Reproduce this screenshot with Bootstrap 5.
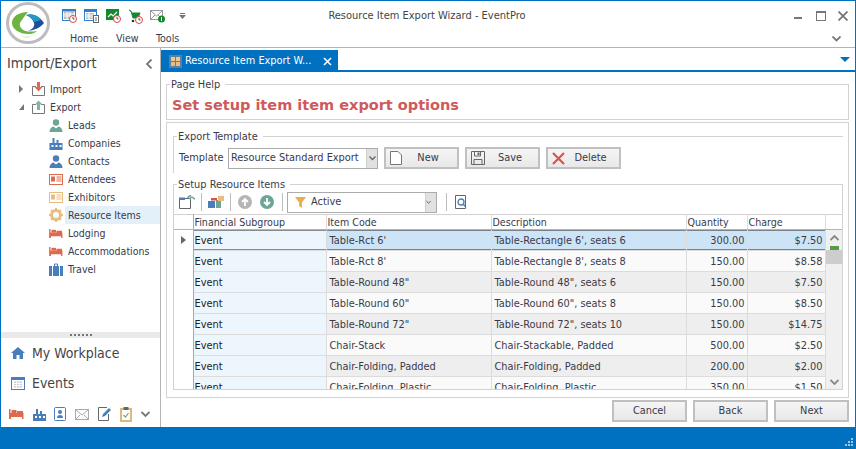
<!DOCTYPE html>
<html lang="en"><head><meta charset="utf-8"><title>Resource Item Export Wizard - EventPro</title>
<link href="https://cdn.jsdelivr.net/npm/bootstrap@5.3.0/dist/css/bootstrap.min.css" rel="stylesheet">
<style>
html,body{height:449px;overflow:hidden;margin:0}
body{font-family:"DejaVu Sans Condensed","DejaVu Sans",sans-serif;font-stretch:condensed;font-size:11px;color:#3a3a4a;background:#fff}
.win{width:856px;height:449px;border:solid #0070c0;border-width:1px 1px 0 1px;overflow:hidden}
.capt{height:47px;border-bottom:1px solid #b4b4b4;flex:none}
.logo-wrap{width:52px;flex:none;padding:1px 0 0 5px}
.qat{height:29px;padding-left:9px;padding-top:1px}
.qat svg{display:block;margin-right:7px}
.qat svg.env{margin-right:13px}
.caption-title{flex:1;text-align:center;font-size:11px;color:#444;padding-right:133px}
.winbtns{gap:12px;padding-right:7px}
.winbtns svg{margin:0}
.ribbon-tabs{height:17px;padding-left:17px;padding-top:1px;font-size:10.6px}
.ribbon-tabs span{display:block}
.rt-home{width:46px}
.rt-view{width:40px}
.rt-more{margin-right:14px}
.side{width:160px;flex:none;border-right:1px solid #b4b4b4}
.side-head{height:32px;padding:0 7px 0 6px;font-size:14.4px;color:#444}
.tree{flex:1;font-size:10.5px}
.tnode{height:18px;display:flex;align-items:center}
.tnode.l1{padding-left:15px}
.tnode.l2{padding-left:48px}
.tnode svg{flex:none}
.tnode .lbl{margin-left:2px;padding-left:3px;height:18px;line-height:18px;flex:1}
.tnode.l1 .lbl{margin-left:1px}
.tnode.hl .lbl{background:#e3eff9}
.split{height:6px;background:#e9e9e9;flex:none}
.dots{width:22px;height:2px;background-image:linear-gradient(90deg,#777 50%,transparent 50%);background-size:4px 2px}
.nav-big{height:30px;padding-left:10px;gap:7px;font-size:13.9px;color:#444;flex:none}
.side-foot{height:29px;padding:3px 10px 0 8px;flex:none}
.work{flex:1;min-width:0}
.tabbar{height:24px;border-bottom:2px solid #0070c0;flex:none}
.doc-tab{width:177px;height:22px;margin-top:2px;background:#0070c0;color:#fff;font-size:10.9px;padding:0 6px 0 8px;gap:3px}
.doc-tab .t{flex:1;white-space:nowrap}
.tab-arrow{margin-left:auto;margin-right:5px;width:0;height:0;border:5px solid transparent;border-top:5px solid #0070c0;border-bottom:0}
.content{padding:6px 6px 0 5px;flex:1;min-height:0}
fieldset.grp{border:solid #d2d2d2;border-width:1px 0 0 1px;padding:0;margin:0;min-width:0}
fieldset.grp>legend{float:none;width:auto;font-size:10.9px;margin:0 0 0 3px;padding:0 5px 0 1px;line-height:13px;color:#3a3a4a}
fieldset.help-fs{height:42px;border:1px solid #d2d2d2}
.help-title{font-family:"DejaVu Sans",sans-serif;font-stretch:normal;font-weight:700;font-size:14.5px;color:#cf5a5a;line-height:20px;padding-left:5px;margin-top:4px;white-space:nowrap}
.frame{border:1px solid #d2d2d2;height:276px;margin-top:2px;padding:7px 5px 0 6px}
.tpl{height:26px;padding-left:5px;margin-top:2px;padding-bottom:0}
.tpl-fs{padding-bottom:2px!important}
.tpl .lab{font-size:10.9px;width:49px;flex:none}
.combo{border:1px solid #ababab;height:21px;display:flex;align-items:center;background:#fff;padding-left:2px;font-size:10.9px}
.combo .txt{flex:1;white-space:nowrap}
.combo .dd{width:11px;height:19px;background:#e1e1e1;border-left:1px solid #d0d0d0;display:flex;align-items:center;justify-content:center}
.combo-tpl{width:150px}
.combo-act{width:150px;height:21px;padding-left:7px}
.combo-act svg{margin-right:5px}
.btnx{border:2px solid #c0c0c0;background:linear-gradient(#f5f5f5,#e8e8e8);border-radius:0;font-size:10.9px;color:#3a3a4a;height:22px;padding:0;line-height:18px;display:flex;align-items:center}
.btn-tpl{width:75px;margin-left:6px}
.btn-tpl svg{margin-left:4px;flex:none}
.btn-tpl span{flex:1;text-align:center;padding-right:3px}
.foot-btn{width:75px;justify-content:center}
.setup-fs{margin-top:5px!important;border-right-width:1px!important}
.tb{height:22px;padding-left:5px;margin-top:0;margin-bottom:1px}
.tb .sep{width:1px;height:18px;background:#bdbdbd;flex:none}
.tb .s1{margin:0 6px}
.tb .s2{margin:0 7px 0 5px}
.tb .s3{margin:0 4px 0 8px}
.tb .s4{margin:0 8px 0 9px}
.gapx{margin-right:8px}
.grid-wrap{height:176px;overflow:hidden;display:flex;border-bottom:1px solid #d2d2d2}
table.gridt{table-layout:fixed;border-collapse:collapse;width:651px;margin:0;font-size:10.9px;flex:none;align-self:flex-start}
table.gridt th,table.gridt td{padding:1px 2px 0 3px;height:21px;border-right:1px solid #dcdcdc;border-bottom:1px solid #dcdcdc;font-weight:400;white-space:nowrap;overflow:hidden;background:#fafafa;color:#3a3a4a;line-height:14px}
table.gridt th{height:15px;background:#fff;border-top:1px solid #d2d2d2;border-bottom:1px solid #b4b4b4;padding:0 1px;font-size:10.6px}
table.gridt tr.alt td{background:#eeeeee}
table.gridt td.fin,table.gridt tr.alt td.fin{background:#eef6fd;color:#222;padding-left:1px}
table.gridt td.num{text-align:right}
table.gridt tr.sel td{background-color:#cde4f7}
table.gridt tr.sel td.fin{background-color:#eef6fd}
table.gridt tr.sel td:not(.ind){background-image:linear-gradient(90deg,#222 50%,transparent 50%),linear-gradient(90deg,#222 50%,transparent 50%);background-size:2px 1px;background-repeat:repeat-x;background-position:0 0,0 100%}
table.gridt tr th.ind,table.gridt tr td.ind,table.gridt tr.sel td.ind,table.gridt tr.alt td.ind{padding:0;background:#fff;border:0;border-right:1px solid #a9a9b4;text-align:center}
table.gridt tr th.ind{border-top:1px solid #d2d2d2;border-bottom:1px solid #b4b4b4}
.sb{width:17px;flex:none;background:#f0f0f0;display:flex;flex-direction:column;height:176px}
.sb .head{height:16px;background:#fff;border-top:1px solid #d2d2d2;border-bottom:1px solid #b4b4b4;flex:none}
.sb .up{height:16px;display:flex;align-items:center;justify-content:center;flex:none}
.sb .mark{height:2px;background:#5a9a46;margin:0 4px;flex:none}
.sb .thumb{height:14px;background:#cdcdcd;flex:none}
.sb .rest{flex:1}
.sb .dn{height:16px;display:flex;align-items:center;justify-content:center;flex:none}
.footer-btns{gap:6px;padding-top:2px;flex:none;height:29px}
.status{height:22px;background:#0070c0;flex:none;padding:0 1px 2px 0}
</style></head><body>
<svg width="0" height="0" class="d-none">
<defs>
<symbol id="bed" viewBox="0 0 15 12"><path fill="#dd6a4c" d="M0 1h1.500v4h13v6H13V9H2v2H0z"/><rect x="2.500" y="2" width="5" height="3" fill="#dd6a4c"/><rect x="8" y="3" width="6" height="2.500" fill="#dd6a4c"/></symbol>
<symbol id="fact" viewBox="0 0 13 13"><path fill="#4a7ebb" d="M0 13V6h3V1h2v5h2V3h2v3h4v7z"/><path fill="#fff" d="M2 8h2v2H2zM6 8h2v2H6zM10 8h2v2h-2z"/></symbol>
<symbol id="pers" viewBox="0 0 13 13"><circle cx="6.500" cy="3.500" r="3.200"/><path d="M0 13c0-3.500 2-5 4-5.500l2.500 2 2.500-2c2 .5 4 2 4 5.500z"/></symbol>
<symbol id="card" viewBox="0 0 14 11"><rect x=".5" y=".5" width="13" height="10" fill="#fff" stroke="currentColor"/><rect x="2" y="2.500" width="4" height="5" fill="currentColor"/><path d="M7.500 3h5M7.500 5h5M7.500 7h5" stroke="currentColor"/></symbol>
<symbol id="cal" viewBox="0 0 14 13"><rect x=".5" y=".5" width="13" height="12" fill="#fff" stroke="#4a7ebb"/><rect x="1" y="1" width="12" height="2" fill="#4a7ebb"/><path d="M3 4.500h8v6H3z" fill="#ccc"/><path d="M3 6.500h8M3 8.500h8M5.500 4.500v6M8.500 4.500v6" stroke="#fff"/></symbol>
</defs></svg>
<div class="win d-flex flex-column">
 <div class="capt d-flex">
  <div class="logo-wrap"><svg width="44" height="42" viewBox="0 0 44 42"><ellipse cx="22" cy="21" rx="20.500" ry="19.500" fill="#fff" stroke="#bdbdbd" stroke-width="3"/><path fill="#6cb33f" d="M22 10C12 10 6 15 6 21c0 6 7 11 17 11 3 0 6-1 8-3-6 1-12 1-15-2-3-3-3-6 0-9 2-3 4-6 6-8z"/><path fill="#1f4f9c" d="M20 13c7-2 14 1 18 8-4 5-9 7-16 8 5-2 7-5 6-8s-3-6-8-8z"/><path fill="#1e9bc7" d="M20 13c6-2 11 0 15 5-2 1-5 1-7 2-1-3-4-5-8-7z"/><path fill="#dfeecf" d="M14 33c4 2 9 2 13 0-4 4-9 4-13 0z"/></svg></div>
  <div class="flex-grow-1 d-flex flex-column">
   <div class="qat d-flex align-items-center">
    <svg width="15" height="14" viewBox="0 0 15 14"><rect x=".5" y=".5" width="13" height="11" fill="#fff" stroke="#2f7fd0"/><rect x="1" y="1" width="12" height="1.500" fill="#2f7fd0"/><path d="M2 3h10v7H2z" fill="#bbb"/><path d="M2 5h10M2 7h10M5 3v7M8 3v7" stroke="#fff"/><circle cx="11" cy="10" r="3.500" fill="#fff" stroke="#d44"/><path d="M11 8v2h1.500" stroke="#555" fill="none"/></svg>
    <svg width="15" height="14" viewBox="0 0 15 14"><rect x=".5" y=".5" width="12" height="11" fill="#fff" stroke="#2f7fd0"/><rect x="1" y="1" width="11" height="2" fill="#2f7fd0"/><path d="M2 4h8v6H2z" fill="#bbb"/><path d="M2 6h8M2 8h8M5 4v6" stroke="#fff"/><rect x="9.500" y="6.500" width="5" height="7" fill="#fff" stroke="#666"/><path d="M11 9h2M11 11h2" stroke="#666"/></svg>
    <svg width="15" height="14" viewBox="0 0 15 14"><rect width="13" height="11" fill="#118a2e"/><path d="M2 8l3-3 2 2 4-4" stroke="#fff" fill="none" stroke-width="1.200"/><circle cx="11" cy="10" r="3.500" fill="#fff" stroke="#d44"/><path d="M11 8v2h1.500" stroke="#555" fill="none"/></svg>
    <svg width="15" height="15" viewBox="0 0 15 15"><path d="M1 1l2 1 2 7h5l2-5H4" fill="#118a2e" stroke="#118a2e"/><circle cx="5" cy="12" r="1.300" fill="#333"/><circle cx="11" cy="11" r="3.500" fill="#fff" stroke="#d44"/><path d="M11 9v2h1.500" stroke="#555" fill="none"/></svg>
    <svg class="env" width="16" height="14" viewBox="0 0 16 14"><rect x=".5" y="1.500" width="12" height="9" fill="#fff" stroke="#999"/><path d="M1 2l5.500 5L12 2M1 10l4-4M12 10L8 6" stroke="#999" fill="none"/><circle cx="11.500" cy="10" r="3.500" fill="#118a2e"/><path d="M11.500 8v4" stroke="#fff"/></svg>
    <svg width="7" height="6" viewBox="0 0 7 6"><path d="M1 0h5v1H1zM0 2h7L3.500 6z" fill="#777"/></svg>
    <div class="caption-title">Resource Item Export Wizard - EventPro</div>
    <div class="winbtns d-flex align-items-center">
     <svg width="10" height="10" viewBox="0 0 10 10"><rect y="6" width="8" height="2" fill="#777"/></svg>
     <svg width="10" height="10" viewBox="0 0 10 10"><rect x=".5" y=".5" width="9" height="9" fill="none" stroke="#777"/><rect width="10" height="2" fill="#777"/></svg>
     <svg width="10" height="10" viewBox="0 0 10 10"><path d="M.5.500l9 9M9.500.500l-9 9" stroke="#777" stroke-width="1.800"/></svg>
    </div>
   </div>
   <div class="ribbon-tabs d-flex align-items-center">
    <span class="rt-home">Home</span><span class="rt-view">View</span><span>Tools</span>
    <svg class="ms-auto rt-more" width="9" height="6" viewBox="0 0 9 6"><path d="M.5.500l4 4 4-4" stroke="#777" stroke-width="1.800" fill="none"/></svg>
   </div>
  </div>
 </div>
 <div class="d-flex flex-grow-1" style="min-height:0">
  <div class="side d-flex flex-column">
   <div class="side-head d-flex align-items-center justify-content-between"><span>Import/Export</span><svg width="8" height="10" viewBox="0 0 8 10"><path d="M6.500.500L2 5l4.500 4.500" stroke="#777" stroke-width="1.800" fill="none"/></svg></div>
   <div class="tree">
    <div class="tnode l1"><svg width="16" height="8" viewBox="0 0 16 8"><path d="M3 0l4 4-4 4z" fill="#777"/></svg><svg width="14" height="14" viewBox="0 0 14 14"><path d="M4 4.500H.5v9h12v-9H9" fill="none" stroke="#777"/><path d="M5 0h3v5h2.500l-4 4.500-4-4.500H5z" fill="#dd6a4c"/></svg><span class="lbl">Import</span></div>
    <div class="tnode l1"><svg width="16" height="8" viewBox="0 0 16 8"><path d="M8 1v6H3z" fill="#777"/></svg><svg width="14" height="14" viewBox="0 0 14 14"><path d="M4 4.500H.5v9h12v-9H9" fill="none" stroke="#777"/><path d="M5 10V4.500H3L6.500.500l4 4H8V10z" fill="#7fb5a8"/></svg><span class="lbl">Export</span></div>
    <div class="tnode l2"><svg width="14" height="13" fill="#6da596"><use href="#pers"/></svg><span class="lbl">Leads</span></div>
    <div class="tnode l2"><svg width="14" height="13"><use href="#fact"/></svg><span class="lbl">Companies</span></div>
    <div class="tnode l2"><svg width="14" height="13" fill="#4a7ebb"><use href="#pers"/></svg><span class="lbl">Contacts</span></div>
    <div class="tnode l2"><svg width="14" height="11" color="#dd6a4c"><use href="#card"/></svg><span class="lbl">Attendees</span></div>
    <div class="tnode l2"><svg width="14" height="11" color="#e8bd80"><use href="#card"/></svg><span class="lbl">Exhibitors</span></div>
    <div class="tnode l2 hl"><svg width="14" height="14" viewBox="0 0 14 14"><circle cx="7" cy="7" r="4.500" fill="none" stroke="#e8bd80" stroke-width="3"/><path d="M7 0v14M0 7h14M2 2l10 10M12 2L2 12" stroke="#e8bd80" stroke-width="2" stroke-dasharray="2.500 9 2.500"/></svg><span class="lbl">Resource Items</span></div>
    <div class="tnode l2"><svg width="14" height="11"><use href="#bed"/></svg><span class="lbl">Lodging</span></div>
    <div class="tnode l2"><svg width="14" height="11"><use href="#bed"/></svg><span class="lbl">Accommodations</span></div>
    <div class="tnode l2"><svg width="14" height="13" viewBox="0 0 14 13"><path d="M0 3h3v10H0zM4 3h6v10H4zM11 3h3v10h-3z" fill="#4a7ebb"/><path d="M5.500 3V1h3v2" fill="none" stroke="#4a7ebb"/></svg><span class="lbl">Travel</span></div>
   </div>
   <div class="split d-flex justify-content-center align-items-center"><div class="dots"></div></div>
   <div class="nav-big d-flex align-items-center"><svg width="14" height="12" viewBox="0 0 14 12"><path d="M7 0l7 6h-2v6H8.500V8h-3v4H2V6H0z" fill="#4a7ebb"/></svg><span>My Workplace</span></div>
   <div class="nav-big d-flex align-items-center"><svg width="14" height="13"><use href="#cal"/></svg><span>Events</span></div>
   <div class="side-foot d-flex align-items-center justify-content-between">
    <svg width="15" height="12"><use href="#bed"/></svg>
    <svg width="13" height="13"><use href="#fact"/></svg>
    <svg width="12" height="14" viewBox="0 0 12 14"><rect x=".5" y=".5" width="11" height="13" rx="1" fill="#fff" stroke="#4a7ebb"/><circle cx="6" cy="5" r="2" fill="#4a7ebb"/><path d="M3 11c0-2 1-3 3-3s3 1 3 3z" fill="#4a7ebb"/></svg>
    <svg width="14" height="11" viewBox="0 0 14 11"><rect x=".5" y=".5" width="13" height="10" fill="#fff" stroke="#aaa"/><path d="M1 1l6 5 6-5M1 10l4-4M13 10L9 6" stroke="#aaa" fill="none"/></svg>
    <svg width="14" height="14" viewBox="0 0 14 14"><path d="M9 .500H.5v13h10V7" fill="none" stroke="#666"/><path d="M4 10l1-3 6-6 2 2-6 6z" fill="#4a7ebb"/></svg>
    <svg width="12" height="15" viewBox="0 0 12 15"><rect x="1" y="2" width="10" height="12" fill="#fff" stroke="#e0b878" stroke-width="2"/><rect x="3.500" y="0" width="5" height="3" fill="#666"/><path d="M3.500 8l2 2 3-4" stroke="#6da596" fill="none" stroke-width="1.200"/></svg>
    <svg width="9" height="7" viewBox="0 0 9 7"><path d="M.5 1l4 4 4-4" stroke="#777" stroke-width="1.800" fill="none"/></svg>
   </div>
  </div>
  <div class="work d-flex flex-column">
   <div class="tabbar d-flex">
    <div class="doc-tab d-flex align-items-center">
     <svg width="13" height="13" viewBox="0 0 13 13"><rect x=".5" y=".5" width="12" height="12" fill="#5b7fa8" stroke="#7a7a7a"/><path d="M2 2h4v4H2zM7 2h4v4H7z" fill="#f0c98a"/><path d="M2 7h4v4H2zM7 7h4v4H7z" fill="#e8bd80"/></svg>
     <span class="t">Resource Item Export W...</span>
     <svg width="9" height="9" viewBox="0 0 9 9"><path d="M1 1l7 7M8 1L1 8" stroke="#fff" stroke-width="1.600"/></svg>
    </div>
    <div class="tab-arrow align-self-center"></div>
   </div>
   <div class="content d-flex flex-column">
    <fieldset class="grp help-fs"><legend>Page Help</legend><div class="help-title">Set setup item item export options</div></fieldset>
    <div class="frame">
     <fieldset class="grp tpl-fs"><legend>Export Template</legend>
      <div class="tpl d-flex align-items-center">
       <span class="lab">Template</span>
       <div class="combo combo-tpl"><span class="txt">Resource Standard Export</span><span class="dd"><svg width="7" height="5" viewBox="0 0 7 5"><path d="M.5.500l3 3 3-3" stroke="#666" stroke-width="1.400" fill="none"/></svg></span></div>
       <button type="button" class="btnx btn-tpl"><svg width="12" height="14" viewBox="0 0 12 14"><path d="M.5.500H8L11.500 4v9.500H.5z" fill="#fff" stroke="#777"/></svg><span>New</span></button>
       <button type="button" class="btnx btn-tpl"><svg width="14" height="14" viewBox="0 0 14 14"><path d="M.5.500h13v13H.5z" fill="none" stroke="#666"/><path d="M3.500 1v4h6V1M3 13V8.500h8V13" fill="none" stroke="#666"/><rect x="6.500" y="1.500" width="2" height="2.500" fill="#666"/></svg><span>Save</span></button>
       <button type="button" class="btnx btn-tpl"><svg width="13" height="13" viewBox="0 0 13 13"><path d="M1 1l11 11M12 1L1 12" stroke="#d9534f" stroke-width="2.200"/></svg><span>Delete</span></button>
      </div>
     </fieldset>
     <fieldset class="grp setup-fs"><legend>Setup Resource Items</legend>
      <div class="tb d-flex align-items-center">
       <svg width="16" height="14" viewBox="0 0 16 14"><path d="M.5 3.500h11v10H.5z" fill="#fff" stroke="#666"/><rect x="0" y="2.500" width="6" height="2.500" fill="#4a7ebb"/><path d="M16 4.500c-1-2-3-2.500-5-2.500M12 0L9 2l3 2.500" stroke="#6da596" stroke-width="1.500" fill="none"/></svg>
       <span class="sep s1"></span>
       <svg width="17" height="12" viewBox="0 0 17 12"><rect y="5" width="7" height="7" fill="#4a7ebb"/><rect x="8" y="4" width="5" height="8" fill="#6da596"/><rect x="3" y="2" width="6" height="2.500" fill="#d9534f"/><rect x="10" y="0" width="6" height="5" fill="#e8bd80"/></svg>
       <span class="sep s2"></span>
       <svg class="gapx" width="14" height="14" viewBox="0 0 14 14"><circle cx="7" cy="7" r="7" fill="#b5b5b5"/><path d="M7 11V4M4 7l3-3 3 3" stroke="#fff" stroke-width="1.800" fill="none"/></svg>
       <svg width="14" height="14" viewBox="0 0 14 14"><circle cx="7" cy="7" r="7" fill="#6da596"/><path d="M7 3v7M4 7l3 3 3-3" stroke="#fff" stroke-width="1.800" fill="none"/></svg>
       <span class="sep s3"></span>
       <div class="combo combo-act"><svg width="11" height="13" viewBox="0 0 12 14"><path d="M0 1h12L7.500 7v6l-3-2V7z" fill="#e8ad50"/></svg><span class="txt">Active</span><span class="dd"><svg width="7" height="5" viewBox="0 0 7 5"><path d="M.5.500l3 3 3-3" stroke="#666" stroke-width="1.400" fill="none"/></svg></span></div>
       <span class="sep s4"></span>
       <svg width="14" height="14" viewBox="0 0 14 14"><path d="M.5.500h10v13H.5z" fill="#fff" stroke="#666"/><circle cx="6" cy="7" r="3" fill="#fff" stroke="#4a7ebb" stroke-width="1.300"/><path d="M8 9l3 3" stroke="#4a7ebb" stroke-width="1.500"/></svg>
      </div>
      <div class="grid-wrap">
       <table class="gridt">
        <colgroup><col style="width:19px"><col style="width:133px"><col style="width:165px"><col style="width:195px"><col style="width:61px"><col style="width:78px"></colgroup>
        <thead><tr><th class="ind"></th><th>Financial Subgroup</th><th>Item Code</th><th>Description</th><th>Quantity</th><th>Charge</th></tr></thead>
        <tbody>
        <tr class="sel"><td class="ind"><svg width="5" height="8" viewBox="0 0 5 8"><path d="M0 0l5 4-5 4z" fill="#666"/></svg></td><td class="fin">Event</td><td>Table-Rct 6'</td><td>Table-Rectangle 6', seats 6</td><td class="num">300.00</td><td class="num">$7.50</td></tr>
        <tr><td class="ind"></td><td class="fin">Event</td><td>Table-Rct 8'</td><td>Table-Rectangle 8', seats 8</td><td class="num">150.00</td><td class="num">$8.58</td></tr>
        <tr class="alt"><td class="ind"></td><td class="fin">Event</td><td>Table-Round 48"</td><td>Table-Round 48", seats 6</td><td class="num">150.00</td><td class="num">$7.50</td></tr>
        <tr><td class="ind"></td><td class="fin">Event</td><td>Table-Round 60"</td><td>Table-Round 60", seats 8</td><td class="num">150.00</td><td class="num">$8.50</td></tr>
        <tr class="alt"><td class="ind"></td><td class="fin">Event</td><td>Table-Round 72"</td><td>Table-Round 72", seats 10</td><td class="num">150.00</td><td class="num">$14.75</td></tr>
        <tr><td class="ind"></td><td class="fin">Event</td><td>Chair-Stack</td><td>Chair-Stackable, Padded</td><td class="num">500.00</td><td class="num">$2.50</td></tr>
        <tr class="alt"><td class="ind"></td><td class="fin">Event</td><td>Chair-Folding, Padded</td><td>Chair-Folding, Padded</td><td class="num">200.00</td><td class="num">$2.00</td></tr>
        <tr><td class="ind"></td><td class="fin">Event</td><td>Chair-Folding, Plastic</td><td>Chair-Folding, Plastic</td><td class="num">350.00</td><td class="num">$1.50</td></tr>
        </tbody>
       </table>
       <div class="sb"><div class="head"></div><div class="up"><svg width="9" height="6" viewBox="0 0 9 6"><path d="M.5 5l4-4 4 4" stroke="#888" stroke-width="1.800" fill="none"/></svg></div><div class="mark"></div><div class="thumb"></div><div class="rest"></div><div class="dn"><svg width="9" height="6" viewBox="0 0 9 6"><path d="M.5 1l4 4 4-4" stroke="#888" stroke-width="1.800" fill="none"/></svg></div></div>
      </div>
     </fieldset>
    </div>
    <div class="footer-btns d-flex justify-content-end align-items-start">
     <button type="button" class="btnx foot-btn">Cancel</button><button type="button" class="btnx foot-btn">Back</button><button type="button" class="btnx foot-btn">Next</button>
    </div>
   </div>
  </div>
 </div>
 <div class="status d-flex justify-content-end align-items-end"><svg width="9" height="9" viewBox="0 0 9 9"><path d="M6 0h2v2H6zM3 3h2v2H3zM6 3h2v2H6zM0 6h2v2H0zM3 6h2v2H3zM6 6h2v2H6z" fill="#9cc6e6"/></svg></div>
</div>
<script src="https://cdn.jsdelivr.net/npm/bootstrap@5.3.0/dist/js/bootstrap.bundle.min.js"></script>
</body></html>
